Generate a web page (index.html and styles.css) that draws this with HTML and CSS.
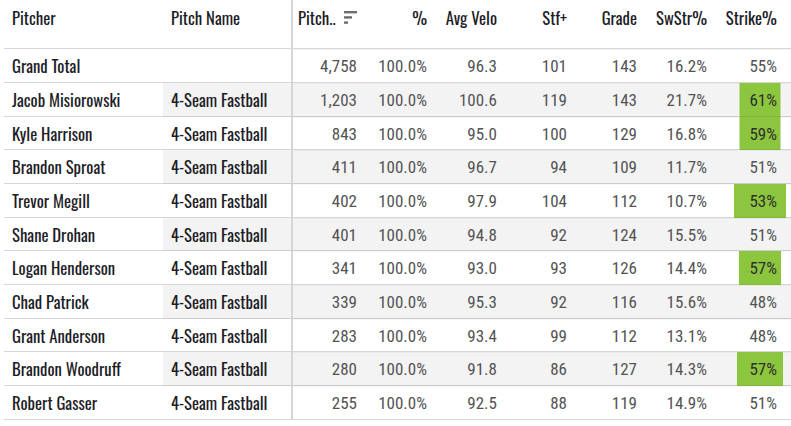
FILE: index.html
```html
<!DOCTYPE html>
<html>
<head>
<meta charset="utf-8">
<title>Pitch table</title>
<link rel="stylesheet" href="styles.css">
</head>
<body>
<div class="table">
  <div class="row head">
    <div class="cell lab">Pitcher</div>
    <div class="cell lab name">Pitch Name</div>
    <div class="cell first sortcol">Pitch..
      <svg class="sort" width="14" height="14" viewBox="0 0 14 14" aria-hidden="true">
        <rect x="0" y="0" width="13" height="2.4" fill="#6e6e6e"/>
        <rect x="0" y="5.2" width="8" height="2.4" fill="#6e6e6e"/>
        <rect x="0" y="10.4" width="4" height="2.4" fill="#6e6e6e"/>
      </svg>
    </div>
    <div class="cell hnum">%</div>
    <div class="cell hnum">Avg Velo</div>
    <div class="cell hnum">Stf+</div>
    <div class="cell hnum">Grade</div>
    <div class="cell hnum">SwStr%</div>
    <div class="cell hnum">Strike%</div>
    <div class="cell tail"></div>
  </div>

  <div class="row">
    <div class="cell lab">Grand Total</div>
    <div class="cell lab name"></div>
    <div class="cell num first">4,758</div>
    <div class="cell num">100.0%</div>
    <div class="cell num">96.3</div>
    <div class="cell num">101</div>
    <div class="cell num">143</div>
    <div class="cell num">16.2%</div>
    <div class="cell num">55%</div>
    <div class="cell tail"></div>
  </div>

  <div class="row band">
    <div class="cell lab">Jacob Misiorowski</div>
    <div class="cell lab name">4-Seam Fastball</div>
    <div class="cell num first">1,203</div>
    <div class="cell num">100.0%</div>
    <div class="cell num">100.6</div>
    <div class="cell num">119</div>
    <div class="cell num">143</div>
    <div class="cell num">21.7%</div>
    <div class="cell num strike"><span class="mark" style="width:41px"></span><span class="val hot">61%</span></div>
    <div class="cell tail"></div>
  </div>

  <div class="row">
    <div class="cell lab">Kyle Harrison</div>
    <div class="cell lab name">4-Seam Fastball</div>
    <div class="cell num first">843</div>
    <div class="cell num">100.0%</div>
    <div class="cell num">95.0</div>
    <div class="cell num">100</div>
    <div class="cell num">129</div>
    <div class="cell num">16.8%</div>
    <div class="cell num strike"><span class="mark" style="width:41px"></span><span class="val hot">59%</span></div>
    <div class="cell tail"></div>
  </div>

  <div class="row band">
    <div class="cell lab">Brandon Sproat</div>
    <div class="cell lab name">4-Seam Fastball</div>
    <div class="cell num first">411</div>
    <div class="cell num">100.0%</div>
    <div class="cell num">96.7</div>
    <div class="cell num">94</div>
    <div class="cell num">109</div>
    <div class="cell num">11.7%</div>
    <div class="cell num strike"><span class="val">51%</span></div>
    <div class="cell tail"></div>
  </div>

  <div class="row">
    <div class="cell lab">Trevor Megill</div>
    <div class="cell lab name">4-Seam Fastball</div>
    <div class="cell num first">402</div>
    <div class="cell num">100.0%</div>
    <div class="cell num">97.9</div>
    <div class="cell num">104</div>
    <div class="cell num">112</div>
    <div class="cell num">10.7%</div>
    <div class="cell num strike"><span class="mark" style="width:52px"></span><span class="val hot">53%</span></div>
    <div class="cell tail"></div>
  </div>

  <div class="row band">
    <div class="cell lab">Shane Drohan</div>
    <div class="cell lab name">4-Seam Fastball</div>
    <div class="cell num first">401</div>
    <div class="cell num">100.0%</div>
    <div class="cell num">94.8</div>
    <div class="cell num">92</div>
    <div class="cell num">124</div>
    <div class="cell num">15.5%</div>
    <div class="cell num strike"><span class="val">51%</span></div>
    <div class="cell tail"></div>
  </div>

  <div class="row">
    <div class="cell lab">Logan Henderson</div>
    <div class="cell lab name">4-Seam Fastball</div>
    <div class="cell num first">341</div>
    <div class="cell num">100.0%</div>
    <div class="cell num">93.0</div>
    <div class="cell num">93</div>
    <div class="cell num">126</div>
    <div class="cell num">14.4%</div>
    <div class="cell num strike"><span class="mark" style="width:42px"></span><span class="val hot">57%</span></div>
    <div class="cell tail"></div>
  </div>

  <div class="row band">
    <div class="cell lab">Chad Patrick</div>
    <div class="cell lab name">4-Seam Fastball</div>
    <div class="cell num first">339</div>
    <div class="cell num">100.0%</div>
    <div class="cell num">95.3</div>
    <div class="cell num">92</div>
    <div class="cell num">116</div>
    <div class="cell num">15.6%</div>
    <div class="cell num strike"><span class="val">48%</span></div>
    <div class="cell tail"></div>
  </div>

  <div class="row">
    <div class="cell lab">Grant Anderson</div>
    <div class="cell lab name">4-Seam Fastball</div>
    <div class="cell num first">283</div>
    <div class="cell num">100.0%</div>
    <div class="cell num">93.4</div>
    <div class="cell num">99</div>
    <div class="cell num">112</div>
    <div class="cell num">13.1%</div>
    <div class="cell num strike"><span class="val">48%</span></div>
    <div class="cell tail"></div>
  </div>

  <div class="row band">
    <div class="cell lab">Brandon Woodruff</div>
    <div class="cell lab name">4-Seam Fastball</div>
    <div class="cell num first">280</div>
    <div class="cell num">100.0%</div>
    <div class="cell num">91.8</div>
    <div class="cell num">86</div>
    <div class="cell num">127</div>
    <div class="cell num">14.3%</div>
    <div class="cell num strike"><span class="mark" style="width:46px"></span><span class="val hot">57%</span></div>
    <div class="cell tail"></div>
  </div>

  <div class="row">
    <div class="cell lab">Robert Gasser</div>
    <div class="cell lab name">4-Seam Fastball</div>
    <div class="cell num first">255</div>
    <div class="cell num">100.0%</div>
    <div class="cell num">92.5</div>
    <div class="cell num">88</div>
    <div class="cell num">119</div>
    <div class="cell num">14.9%</div>
    <div class="cell num strike"><span class="val">51%</span></div>
    <div class="cell tail"></div>
  </div>
</div>
</body>
</html>
```
FILE: styles.css
```css
html, body {
  margin: 0;
  padding: 0;
  background: #ffffff;
}

body {
  width: 791px;
  height: 426px;
  overflow: hidden;
}

.table {
  padding-left: 4px;
  font-family: "Oswald", "Roboto Condensed", "Liberation Sans", sans-serif;
  font-size: 16.7px;
  color: #1d1d27;
}

.row {
  display: grid;
  grid-template-columns: 159px 128px 69px repeat(6, 70px) 11px;
  height: 33.7px;
}

.row.head {
  height: 49.3px;
}

.cell {
  box-sizing: border-box;
  border-bottom: 1px solid rgba(0, 0, 0, 0.16);
  display: flex;
  align-items: center;
  white-space: nowrap;
  min-width: 0;
}

.lab {
  padding-left: 8px;
}

.first {
  border-left: 2px solid #d6d6d6;
}

.num {
  justify-content: flex-end;
  padding-right: 3px;
  padding-top: 1px;
  font-family: "Roboto Condensed", "Liberation Sans", sans-serif;
  font-size: 17px;
  color: #535353;
}

.row:not(.head) .num,
.row:not(.head) .tail {
  box-shadow: inset 0 1px 0 rgba(0, 0, 0, 0.035);
}

/* header */
.head .cell {
  align-items: flex-start;
  padding-top: 6px;
  line-height: 24px;
}

.head .hnum {
  justify-content: flex-end;
  padding-right: 3px;
}

.head .sortcol {
  padding-left: 5px;
}

.sort {
  margin-left: 8px;
  margin-top: 5px;
}

/* banding */
.band .name,
.band .num,
.band .tail {
  background: #f3f3f3;
}

/* highlighted strike% */
.strike {
  position: relative;
}

.mark {
  position: absolute;
  top: 0;
  bottom: -1px;
  left: 50px;
  transform: translateX(-50%);
  background: #8cc63e;
  box-shadow: inset 0 -1px 0 rgba(0, 0, 0, 0.08);
}

.val {
  position: relative;
}

.val.hot {
  color: #2f2f2f;
}
```
